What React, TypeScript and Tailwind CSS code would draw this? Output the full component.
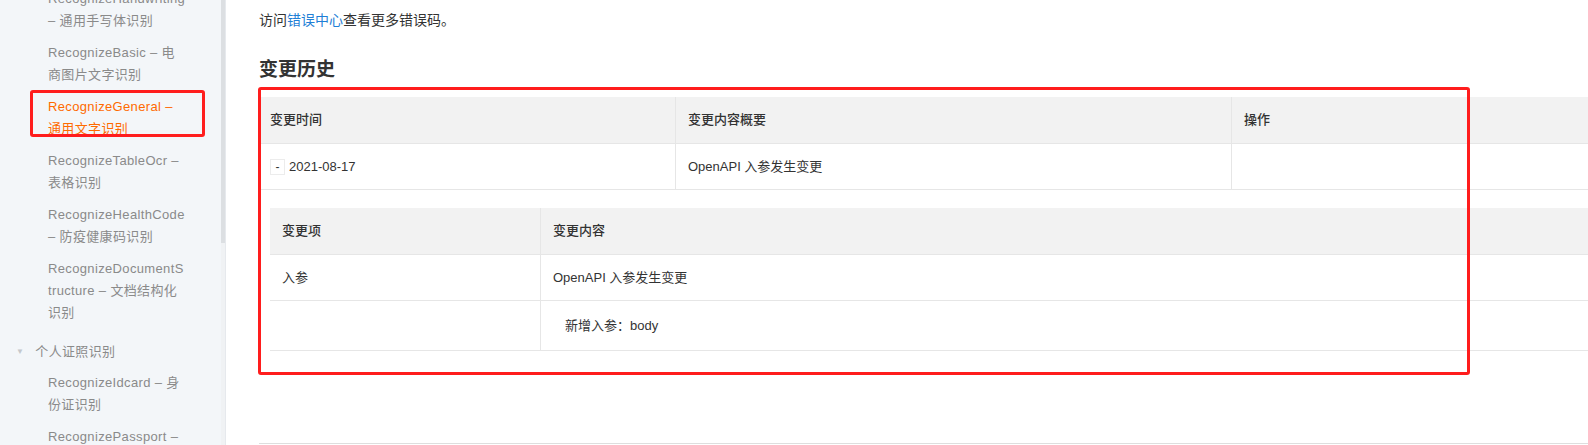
import type { ReactNode } from 'react';

const FONT = { fontFamily: '"Liberation Sans", "Noto Sans CJK SC", sans-serif' };

// Sidebar entries below the visible top edge. The first one is cut off.
const NAV_ITEMS: { label: string; active?: boolean }[] = [
  { label: 'RecognizeHandwriting – 通用手写体识别' },
  { label: 'RecognizeBasic – 电商图片文字识别' },
  { label: 'RecognizeGeneral – 通用文字识别', active: true },
  { label: 'RecognizeTableOcr – 表格识别' },
  { label: 'RecognizeHealthCode – 防疫健康码识别' },
  { label: 'RecognizeDocumentStructure – 文档结构化识别' },
];

const NAV_ITEMS_2 = [
  { label: 'RecognizeIdcard – 身份证识别' },
  { label: 'RecognizePassport – 护照识别' },
];

function NavItem({ label, active }: { label: string; active?: boolean }) {
  return (
    <div
      className={`w-[138px] py-[5px] pl-[48px] box-content text-[13px] leading-[22px] tracking-[0.35px] break-all ${
        active ? 'text-[#ff6a00]' : 'text-[#8a8a8a]'
      }`}
    >
      {label}
    </div>
  );
}

function Sidebar() {
  return (
    <aside className="relative flex h-[445px] w-[226px] shrink-0 overflow-hidden border-r border-[#e6e9ed] bg-[#f3f6f9]">
      <div className="w-[221px] -mt-[17px]">
        {NAV_ITEMS.map((it) => (
          <NavItem key={it.label} {...it} />
        ))}
        <div className="flex items-center pt-[12px] pb-[4px] text-[13px] leading-[22px] tracking-[0.35px] text-[#8a8a8a]">
          <span className="ml-[16px] mr-[11px] text-[8px] text-[#c4c8cc]">▼</span>
          个人证照识别
        </div>
        {NAV_ITEMS_2.map((it) => (
          <NavItem key={it.label} {...it} />
        ))}
      </div>
      {/* scrollbar */}
      <div className="w-[4px] bg-[#f0f2f4]">
        <div className="h-[243px] w-full bg-[#dcdfe2]" />
      </div>
      {/* annotation around the active item */}
      <div className="absolute left-[30px] top-[90px] h-[47px] w-[175px] rounded-[3px] border-[3px] border-[#ff1d1d]" />
    </aside>
  );
}

function Th({ children, className = '' }: { children?: ReactNode; className?: string }) {
  return (
    <div className={`flex h-[46px] items-center px-3 text-[13px] font-medium text-[#333] ${className}`}>
      {children}
    </div>
  );
}

function Td({ children, className = '' }: { children?: ReactNode; className?: string }) {
  return (
    <div className={`flex items-center px-3 text-[13px] text-[#333] ${className}`}>{children}</div>
  );
}

function ChangeTable() {
  return (
    <div className="w-[1400px]">
      {/* header */}
      <div className="grid grid-cols-[418px_556px_426px] border-b border-[#e6e6e6] bg-[#f2f2f2]">
        <Th className="border-r border-[#e6e6e6]">变更时间</Th>
        <Th className="border-r border-[#e6e6e6]">变更内容概要</Th>
        <Th>操作</Th>
      </div>
      <div className="grid h-[46px] grid-cols-[418px_556px_426px] border-b border-[#e6e6e6]">
        <Td className="border-r border-[#e6e6e6]">
          <span className="mr-[4px] flex h-[16px] w-[15px] items-center justify-center border border-[#ececec] text-[12px] leading-none">
            -
          </span>
          2021-08-17
        </Td>
        <Td className="border-r border-[#e6e6e6]">OpenAPI 入参发生变更</Td>
        <Td />
      </div>
      {/* expanded row */}
      <div className="px-3 pt-[18px] pb-[19px]">
        <div className="grid grid-cols-[271px_1fr] border-b border-[#e6e6e6] bg-[#f2f2f2]">
          <Th className="h-[45px] border-r border-[#e6e6e6]">变更项</Th>
          <Th className="h-[45px]">变更内容</Th>
        </div>
        <div className="grid h-[46px] grid-cols-[271px_1fr] border-b border-[#e6e6e6]">
          <Td className="border-r border-[#e6e6e6]">入参</Td>
          <Td>OpenAPI 入参发生变更</Td>
        </div>
        <div className="grid h-[50px] grid-cols-[271px_1fr] border-b border-[#e6e6e6]">
          <Td className="border-r border-[#e6e6e6]" />
          <Td className="pl-[24px]">新增入参：body</Td>
        </div>
      </div>
    </div>
  );
}

export default function App() {
  return (
    <div className="flex h-[445px] w-[1588px] overflow-hidden bg-white" style={FONT}>
      <Sidebar />
      <main className="relative min-w-0 flex-1 pl-[33px] pt-[9px]">
        <p className="text-[14px] leading-[22px] text-[#333]">
          访问<span className="text-[#1f7fd6]">错误中心</span>查看更多错误码。
        </p>
        <h2 className="mt-[26px] text-[19px] font-bold leading-[26px] text-[#333]">变更历史</h2>
        <div className="mt-[14px] -ml-px">
          <ChangeTable />
        </div>
        <div className="mt-[73px] border-t border-[#dedede]" />
        {/* annotation around the table */}
        <div className="absolute left-[32px] top-[87px] h-[288px] w-[1212px] rounded-[3px] border-[3px] border-[#ff1d1d]" />
      </main>
    </div>
  );
}
